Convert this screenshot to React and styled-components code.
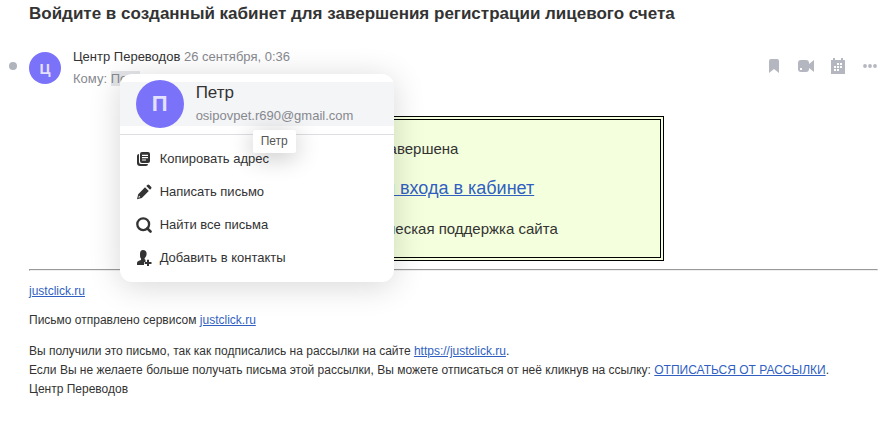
import React from 'react'
import styled, { createGlobalStyle } from 'styled-components'

const GlobalStyle = createGlobalStyle`
  body {
    margin: 0;
    background: #fff;
    color: #333;
    font-family: 'Liberation Sans', Arial, sans-serif;
    font-size: 13px;
    line-height: 19px;
  }

  a {
    color: #315fc1;
  }

  button {
    padding: 0;
    border: 0;
    background: none;
    color: inherit;
    font: inherit;
    cursor: pointer;
  }
`

const Page = styled.main`
  padding: 4px 9px 32px 29px;
`

const Title = styled.h1`
  margin: 0;
  font-size: 17px;
  line-height: 20px;
`

const Header = styled.header`
  display: flex;
  align-items: flex-start;
  margin: 22px 0 0 -20px;
`

const Unread = styled.button`
  flex: none;
  width: 8px;
  height: 8px;
  margin: 16px 12px 0 0;

  && {
    border-radius: 50%;
    background: #b0b5bd;
  }
`

const Avatar = styled.span`
  display: flex;
  flex: none;
  align-items: center;
  justify-content: center;
  width: ${props => props.$size}px;
  height: ${props => props.$size}px;
  border-radius: 50%;
  background: #7b72fa;
  color: #e4e0ff;
  font-weight: bold;
  font-size: ${props => (props.$size > 40 ? 22 : 15)}px;
`

const SenderAvatar = styled(Avatar)`
  margin-top: 6px;
`

const Meta = styled.div`
  flex: 1;
  margin-left: 12px;
  line-height: 22px;
  color: #87898f;
`

const Sender = styled.span`
  color: #333;
`

const Recipient = styled.span`
  display: inline-block;
  position: relative;
`

const Chip = styled.button`
  && {
    line-height: 15px;
    background: #e4e6ea;
  }
`

const Tools = styled.div`
  display: flex;
  gap: 16px;
  margin-top: 12px;
  color: #b5b7c0;

  button {
    display: block;
    height: 16px;
  }

  svg {
    display: block;
  }
`

const Card = styled.div`
  position: absolute;
  z-index: 1;
  top: 6px;
  left: 9px;
  width: 274px;
  padding-top: 8px;
  box-sizing: border-box;
  border-radius: 12px;
  background: #fff;
  box-shadow: 0 4px 32px rgba(0, 0, 0, 0.16);
  color: #333;
`

const Contact = styled.div`
  display: flex;
  align-items: center;
  gap: 12px;
  height: 44px;
  padding: 0 16px;
  background: #f4f5f7;
`

const ContactName = styled.div`
  font-size: 17px;
  line-height: 24px;
`

const ContactMail = styled.div`
  line-height: 22px;
  color: #87898f;
`

const Actions = styled.div`
  margin-top: 8px;
  padding: 7px 0 8px;
  border-top: 1px solid #dcdee1;
`

const Action = styled.button`
  display: flex;
  align-items: center;
  gap: 8px;
  width: 100%;
  height: 33px;

  && {
    padding: 0 16px;
  }
`

const Tooltip = styled.div`
  position: absolute;
  top: 56px;
  left: 133px;
  padding: 0 8px;
  border-radius: 2px;
  background: #fff;
  box-shadow: 0 4px 24px rgba(0, 0, 0, 0.24);
  color: #555;
  font-size: 12px;
  line-height: 23px;
`

const Notice = styled.section`
  max-width: 411px;
  margin: 26px auto 0;
  padding: 17px 1px 16px;
  border: 4px double #000;
  background: #f4ffdd;
  font-size: 15px;
`

const NoticeText = styled.p`
  margin: 0;
  line-height: 24px;
`

const NoticeLink = styled.p`
  margin: 15px 0 17px;
  font-size: 18px;
  line-height: 24px;
`

const Rule = styled.hr`
  margin: 8px 0 11px;
`

const Footer = styled.footer`
  font-size: 12px;
`

const Text = styled.p`
  margin: 0 0 ${props => props.$gap || 0}px;
`

const BookmarkIcon = () => (
  <svg width="16" height="16" viewBox="0 0 16 16" fill="currentColor">
    <path d="M5 1h6a2 2 0 0 1 2 2v12l-5-4-5 4V3a2 2 0 0 1 2-2z" />
  </svg>
)

const VideoIcon = () => (
  <svg width="16" height="16" viewBox="0 0 16 16" fill="currentColor">
    <path
      fillRule="evenodd"
      d="M3 2h5a3 3 0 0 1 3 3v1l5-4v12l-5-4v1a3 3 0 0 1-3 3H3a3 3 0 0 1-3-3V5a3 3 0 0 1 3-3zm-1 8v2h2v-2z"
    />
  </svg>
)

const CalendarIcon = () => (
  <svg width="16" height="16" viewBox="0 0 16 16" fill="currentColor">
    <path
      fillRule="evenodd"
      d="M3 0h2v2h6V0h2v2h2v14H1V2h2zM7 5v2h2V5zm3 0v2h2V5zM4 8v2h2V8zm3 0v2h2V8zm3 0v2h2V8zm-6 3v2h2v-2zm3 0v2h2v-2z"
    />
  </svg>
)

const MoreIcon = () => (
  <svg width="16" height="16" viewBox="0 0 16 16" fill="currentColor">
    <circle cx="3" cy="8" r="1.9" />
    <circle cx="8" cy="8" r="1.9" />
    <circle cx="13" cy="8" r="1.9" />
  </svg>
)

const CopyIcon = () => (
  <svg width="16" height="16" viewBox="0 0 16 16" fill="currentColor">
    <path
      fillRule="evenodd"
      d="M6 1h6a2 2 0 0 1 2 2v7a2 2 0 0 1-2 2H6a2 2 0 0 1-2-2V3a2 2 0 0 1 2-2zm0 2.8v1.1h6V3.8zm0 2.3v1.1h6V6.1zm0 2.3v1.1h4V8.4z"
    />
    <path d="M1 5a2 2 0 0 1 2-2v8a2 2 0 0 0 2 2h7a2 2 0 0 1-2 2H4a3 3 0 0 1-3-3z" />
  </svg>
)

const PencilIcon = () => (
  <svg width="16" height="16" viewBox="0 0 16 16" fill="currentColor">
    <path
      fillRule="evenodd"
      d="M9 3.2l3.8 3.8-7 7L1 15.2l1.2-5zM3 11.7l-.6 2 2-.6z"
    />
    <path d="M10.3 2l1-1a1.4 1.4 0 0 1 2 0l1.7 1.7a1.4 1.4 0 0 1 0 2l-1 1z" />
  </svg>
)

const SearchIcon = () => (
  <svg width="16" height="16" viewBox="0 0 16 16" fill="none" stroke="currentColor">
    <circle cx="7.2" cy="7.2" r="5.9" strokeWidth="2.3" />
    <path d="M11.300 11.300l3.200 3.200" strokeWidth="2.600" strokeLinecap="round" />
  </svg>
)

const AddContactIcon = () => (
  <svg width="16" height="16" viewBox="0 0 16 16" fill="currentColor">
    <path d="M7 0c2.200 0 3.600 1.400 3.600 3.600 0 1.800-.6 3.400-2 4.600v1l.9.5V12H8v3H1v-1.500c0-1.700 1-2.400 2.500-2.900L5 10V8.500C4 7.500 4 6 4 4 4 1.500 5 0 7 0z" />
    <path d="M11 9.800h2V12h2.500v2H13v2h-2v-2H8.700v-2H11z" />
  </svg>
)

const actions = [
  { label: 'Копировать адрес', Icon: CopyIcon },
  { label: 'Написать письмо', Icon: PencilIcon },
  { label: 'Найти все письма', Icon: SearchIcon },
  { label: 'Добавить в контакты', Icon: AddContactIcon },
]

const tools = [
  { label: 'Закладка', Icon: BookmarkIcon },
  { label: 'Видеозвонок', Icon: VideoIcon },
  { label: 'Календарь', Icon: CalendarIcon },
  { label: 'Ещё', Icon: MoreIcon },
]

const ContactCard = () => (
  <Card>
    <Contact>
      <Avatar $size={48}>П</Avatar>
      <div>
        <ContactName>Петр</ContactName>
        <ContactMail>osipovpet.r690@gmail.com</ContactMail>
      </div>
    </Contact>
    <Actions>
      {actions.map(({ label, Icon }) => (
        <Action key={label} type="button">
          <Icon />
          {label}
        </Action>
      ))}
    </Actions>
    <Tooltip role="tooltip">Петр</Tooltip>
  </Card>
)

const App = () => (
  <>
    <GlobalStyle />
    <Page>
      <Title>Войдите в созданный кабинет для завершения регистрации лицевого счета</Title>
      <Header>
        <Unread type="button" aria-label="Отметить прочитанным" />
        <SenderAvatar $size={32}>Ц</SenderAvatar>
        <Meta>
          <div>
            <Sender>Центр Переводов</Sender> 26 сентября, 0:36
          </div>
          <div>
            Кому:{' '}
            <Recipient>
              <Chip type="button">Петр</Chip>
              <ContactCard />
            </Recipient>
          </div>
        </Meta>
        <Tools>
          {tools.map(({ label, Icon }) => (
            <button key={label} type="button" aria-label={label}>
              <Icon />
            </button>
          ))}
        </Tools>
      </Header>
      <Notice>
        <NoticeText>Ваша регистрация завершена</NoticeText>
        <NoticeLink>
          <a href="#login">Ваша ссылка для входа в кабинет</a>
        </NoticeLink>
        <NoticeText>С уважением, техническая поддержка сайта</NoticeText>
      </Notice>
      <Rule />
      <Footer>
        <Text $gap={10}>
          <a href="#justclick">justclick.ru</a>
        </Text>
        <Text $gap={12}>
          Письмо отправлено сервисом <a href="#justclick">justclick.ru</a>
        </Text>
        <Text>
          Вы получили это письмо, так как подписались на рассылки на сайте{' '}
          <a href="#justclick">https://justclick.ru</a>.
        </Text>
        <Text>
          Если Вы не желаете больше получать письма этой рассылки, Вы можете отписаться от неё
          кликнув на ссылку: <a href="#unsubscribe">ОТПИСАТЬСЯ ОТ РАССЫЛКИ</a>.
        </Text>
        <Text>Центр Переводов</Text>
      </Footer>
    </Page>
  </>
)

export default App
